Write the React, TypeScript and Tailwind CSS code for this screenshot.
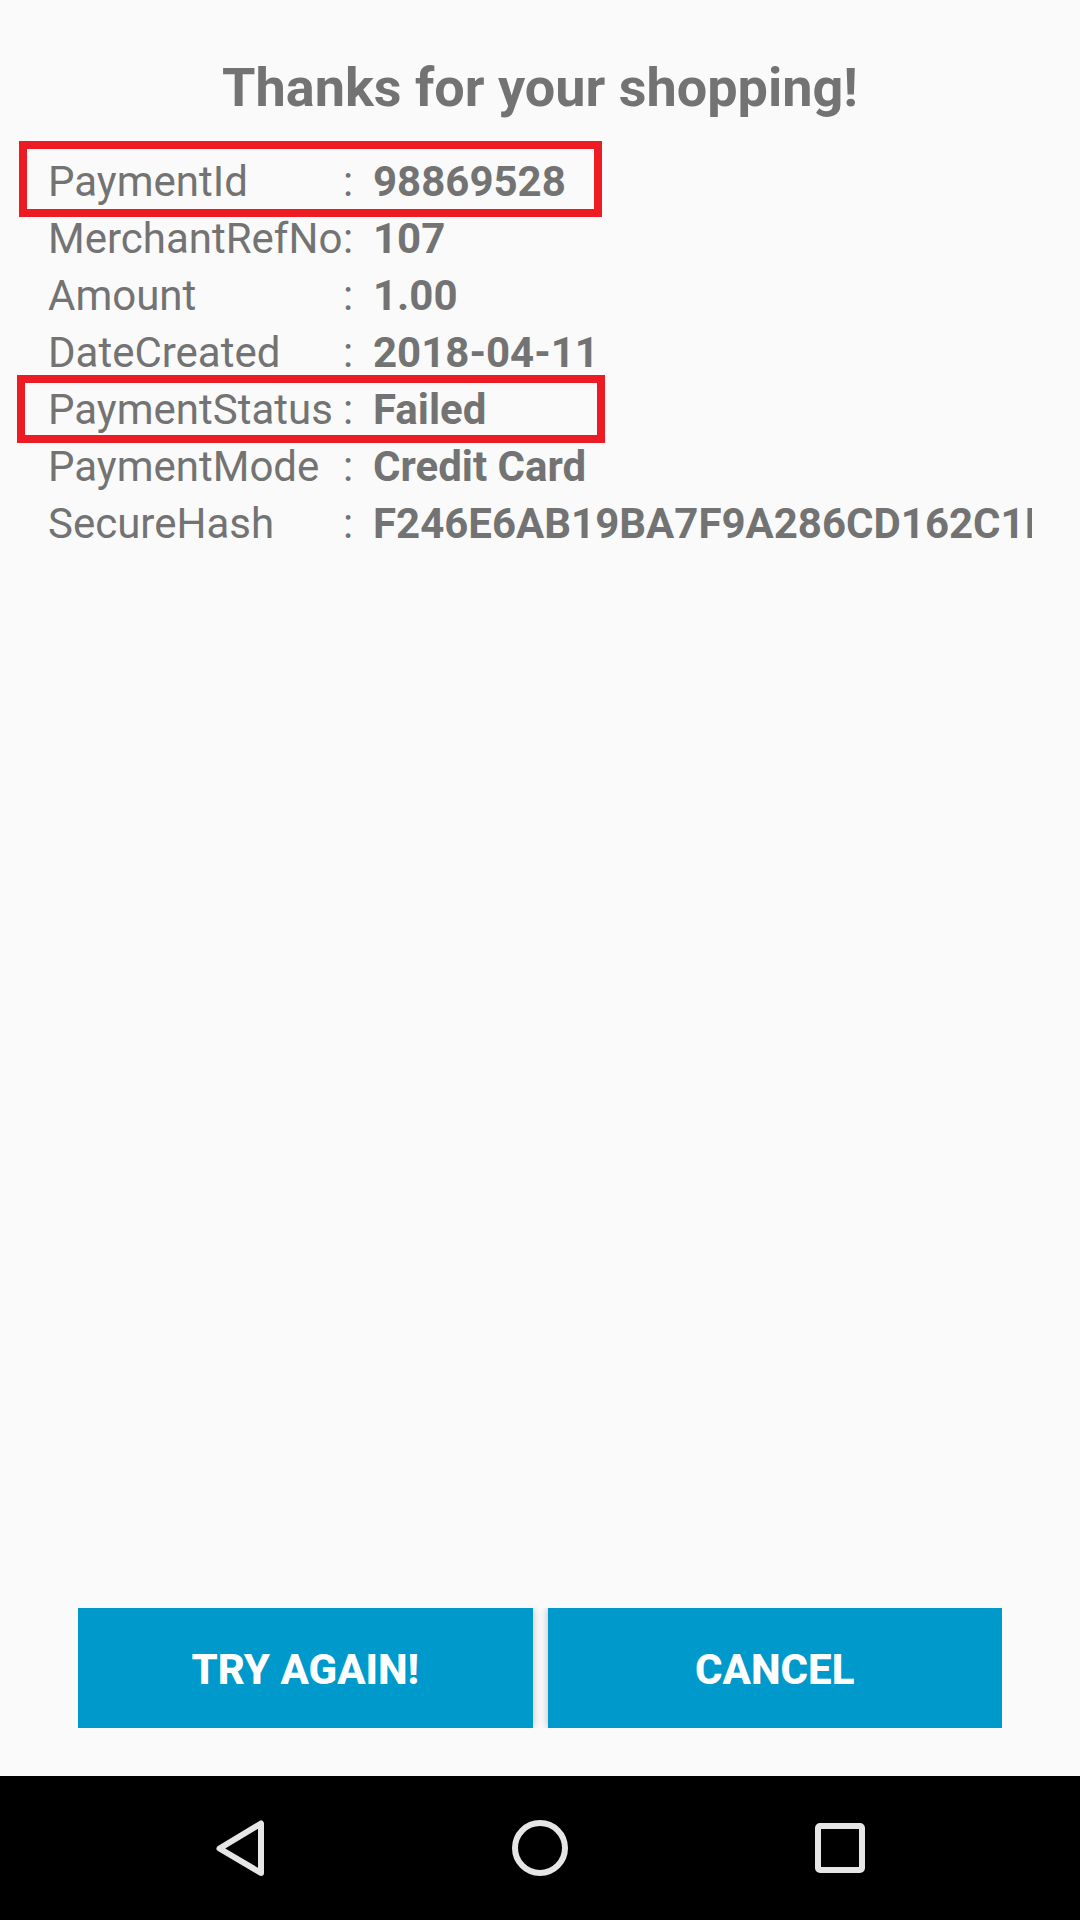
const rows = [
  { label: 'PaymentId', value: '98869528' },
  { label: 'MerchantRefNo', value: '107' },
  { label: 'Amount', value: '1.00' },
  { label: 'DateCreated', value: '2018-04-11' },
  { label: 'PaymentStatus', value: 'Failed' },
  { label: 'PaymentMode', value: 'Credit Card' },
  { label: 'SecureHash', value: 'F246E6AB19BA7F9A286CD162C1E' },
];

const actions = ['TRY AGAIN!', 'CANCEL'];

export default function App() {
  return (
    <div className="flex min-h-screen flex-col bg-[#fafafa] font-['Roboto',sans-serif] text-[#737373]">
      <main className="flex flex-1 flex-col px-12 pt-12 pb-12">
        <h1 className="text-center text-[54px] leading-[80px] font-bold">Thanks for your shopping!</h1>
        <div className="relative mt-[25px]">
          <table className="w-full table-fixed border-collapse text-[42px] leading-[57px]">
            <tbody>
              {rows.map((row) => (
                <tr key={row.label}>
                  <th scope="row" className="w-[295px] p-0 text-left font-normal whitespace-nowrap">{row.label}</th>
                  <td className="w-[30px] p-0">:</td>
                  <td className="overflow-hidden p-0 font-bold whitespace-nowrap">{row.value}</td>
                </tr>
              ))}
            </tbody>
          </table>
          <div className="absolute top-[-12px] left-[-29px] h-[76px] w-[583px] border-8 border-[#ed1c24]" />
          <div className="absolute top-[222px] left-[-31px] h-[68px] w-[588px] border-8 border-[#ed1c24]" />
        </div>
        <div className="mx-[30px] mt-auto grid grid-cols-2 gap-[15px] overflow-hidden">
          {actions.map((action) => (
            <button
              key={action}
              type="button"
              className="h-[120px] bg-[#0099cc] pt-0.5 text-[42px] font-extrabold text-white shadow-[0_0_8px_rgba(0,0,0,0.25)]"
            >
              {action}
            </button>
          ))}
        </div>
      </main>
      <nav className="grid h-36 grid-cols-3 bg-black px-[90px]">
        <button type="button" aria-label="Back" className="flex items-center justify-center">
          <svg width="60" height="60" viewBox="0 0 60 60" fill="none" stroke="#e6e6e6" strokeWidth="6" strokeLinejoin="round">
            <path d="M51 5.5v49.5L9.5 30.5z" />
          </svg>
        </button>
        <button type="button" aria-label="Home" className="flex items-center justify-center">
          <svg width="60" height="60" viewBox="0 0 60 60" fill="none" stroke="#e6e6e6" strokeWidth="6">
            <circle cx="30" cy="30" r="25" />
          </svg>
        </button>
        <button type="button" aria-label="Recent apps" className="flex items-center justify-center">
          <svg width="60" height="60" viewBox="0 0 60 60" fill="none" stroke="#e6e6e6" strokeWidth="6">
            <rect x="8" y="8" width="44" height="44" rx="2" />
          </svg>
        </button>
      </nav>
    </div>
  );
}
